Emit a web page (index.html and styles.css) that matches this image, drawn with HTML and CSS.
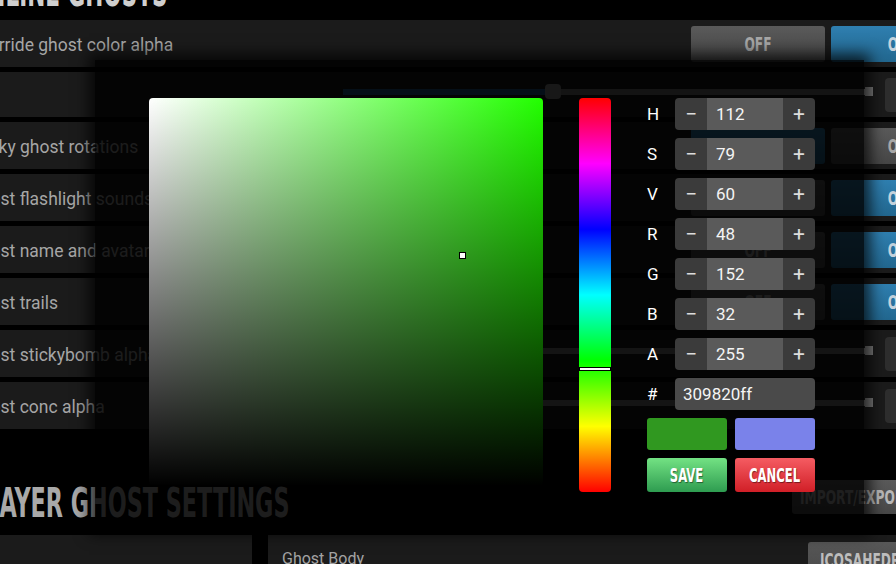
FILE: index.html
```html
<!DOCTYPE html>
<html>
<head>
<meta charset="utf-8">
<link rel="stylesheet" href="styles.css">
</head>
<body>
<div class="page">
  <h1 class="title"><span class="cond">ONLINE GHOSTS</span></h1>
  <div class="rows">
    <div class="row">
      <span class="label">Override ghost color alpha</span>
      <div class="toggle"><button class="btn gray"><span class="cond">OFF</span></button><button class="btn blue"><span class="cond">ON</span></button></div>
    </div>
    <div class="row slim">
      <span class="label short"></span>
      <div class="track"><div class="fill"></div><div class="thumb"></div><div class="line"></div><div class="cap"></div></div>
      <div class="numbox"></div>
    </div>
    <div class="row">
      <span class="label">Sticky ghost rotations</span>
      <div class="toggle"><button class="btn blue"><span class="cond">OFF</span></button><button class="btn gray"><span class="cond">ON</span></button></div>
    </div>
    <div class="row">
      <span class="label">Ghost flashlight sounds</span>
      <div class="toggle"><button class="btn gray"><span class="cond">OFF</span></button><button class="btn blue"><span class="cond">ON</span></button></div>
    </div>
    <div class="row">
      <span class="label">Ghost name and avatar</span>
      <div class="toggle"><button class="btn gray"><span class="cond">OFF</span></button><button class="btn blue"><span class="cond">ON</span></button></div>
    </div>
    <div class="row">
      <span class="label">Ghost trails</span>
      <div class="toggle"><button class="btn gray"><span class="cond">OFF</span></button><button class="btn blue"><span class="cond">ON</span></button></div>
    </div>
    <div class="row">
      <span class="label short">Ghost stickybomb alpha</span>
      <div class="track"><div class="line"></div><div class="cap"></div></div>
      <div class="numbox"></div>
    </div>
    <div class="row">
      <span class="label short">Ghost conc alpha</span>
      <div class="track"><div class="line"></div><div class="cap"></div></div>
      <div class="numbox"></div>
    </div>
  </div>
  <div class="sect">
    <h2 class="title sect-title"><span class="cond">PLAYER GHOST SETTINGS</span></h2>
    <button class="ie"><span class="cond">IMPORT/EXPORT</span></button>
  </div>
  <div class="bottom">
    <div class="panel"></div>
    <div class="panel right">
      <span class="plabel">Ghost Body</span>
      <button class="ico"><span class="cond">ICOSAHEDRON</span></button>
    </div>
  </div>
</div>

<div class="modal">
  <div class="sv"><div class="sv-marker"></div></div>
  <div class="hue"><div class="hue-marker"></div></div>
  <div class="controls">
    <div class="crow"><span class="clabel">H</span><div class="spin"><span class="m">−</span><span class="v">112</span><span class="p">+</span></div></div>
    <div class="crow"><span class="clabel">S</span><div class="spin"><span class="m">−</span><span class="v">79</span><span class="p">+</span></div></div>
    <div class="crow"><span class="clabel">V</span><div class="spin"><span class="m">−</span><span class="v">60</span><span class="p">+</span></div></div>
    <div class="crow"><span class="clabel">R</span><div class="spin"><span class="m">−</span><span class="v">48</span><span class="p">+</span></div></div>
    <div class="crow"><span class="clabel">G</span><div class="spin"><span class="m">−</span><span class="v">152</span><span class="p">+</span></div></div>
    <div class="crow"><span class="clabel">B</span><div class="spin"><span class="m">−</span><span class="v">32</span><span class="p">+</span></div></div>
    <div class="crow"><span class="clabel">A</span><div class="spin"><span class="m">−</span><span class="v">255</span><span class="p">+</span></div></div>
    <div class="crow"><span class="clabel">#</span><div class="hex">309820ff</div></div>
    <div class="swatches"><div class="sw new"></div><div class="sw old"></div></div>
    <div class="acts"><button class="save"><span class="cond">SAVE</span></button><button class="cancel"><span class="cond">CANCEL</span></button></div>
  </div>
</div>
</body>
</html>
```
FILE: styles.css
```css
* { box-sizing: border-box; margin: 0; padding: 0; }
html, body { width: 896px; height: 564px; overflow: hidden; background: #000; }
body { position: relative; font-family: Roboto, "Liberation Sans", sans-serif; }
button { border: 0; cursor: pointer; font: inherit; }

.cond {
  display: inline-block;
  font-family: "DejaVu Sans Condensed", "DejaVu Sans", sans-serif;
  font-weight: bold;
  transform: scaleX(0.68);
  white-space: nowrap;
}

.page { margin-left: -43px; width: 1060px; display: flex; flex-direction: column; }

.title {
  height: 48px;
  line-height: 48px;
  margin-top: -32px;
  padding-left: 12px;
  font-size: 40px;
  font-weight: bold;
  color: #cfcfcf;
  white-space: nowrap;
}
.title .cond { transform: scaleX(0.6); transform-origin: left center; }

.rows { margin-top: 4px; display: flex; flex-direction: column; gap: 5px; }
.row { height: 47px; background: #1b1b1b; display: flex; align-items: center; padding-left: 12px; }
.row.slim { height: 45px; }
.label { width: 722px; font-size: 17.5px; color: #a6a6a6; white-space: nowrap; padding-top: 2px; }
.label.short { width: 374px; }

.toggle { display: flex; gap: 6px; }
.btn { width: 134px; height: 36px; border-radius: 3px; font-size: 20px; line-height: 36px; text-align: center; }
.btn.gray { background: linear-gradient(#5a5a5a, #464646); color: #a8a8a8; }
.btn.blue { background: linear-gradient(#2f7fb0, #22678f); color: #c4d2dc; }

.track { width: 530px; height: 15px; display: flex; align-items: center; margin-bottom: 6px; }
.fill { width: 202px; height: 6px; background: #1e5a8c; }
.thumb { width: 16px; height: 15px; border-radius: 4px; background: #8c8c8c; }
.line { flex: 1; height: 6px; background: #777; }
.cap { width: 8px; height: 9px; background: #7c7c7c; }
.numbox { width: 75px; height: 34px; margin-left: 12px; background: #2e2e2e; border-radius: 4px; }

.sect { margin-top: 50px; height: 48px; display: grid; grid-template-columns: 835px 140px; }
.sect-title { margin-top: 0; color: #a9a9a9; }
.sect-title .cond { transform: scaleX(0.62); }
.ie {
  margin-top: 1px; height: 34px; border-radius: 3px;
  background: linear-gradient(#5a5a5a, #474747); color: #b8b8b8;
  font-size: 20px; text-align: left; padding-left: 0;
}
.ie .cond { transform-origin: left center; margin-left: 8px; }

.bottom { margin-top: 8px; height: 47px; display: grid; grid-template-columns: 295px 1fr; gap: 16px; }
.panel { background: #1b1b1b; }
.panel.right { display: flex; padding-left: 14px; }
.plabel { width: 526px; font-size: 16px; color: #a3a3a3; align-self: center; }
.ico {
  width: 130px; height: 36px; margin-top: 7px; border-radius: 3px;
  background: linear-gradient(#585858, #474747); color: #bdbdbd;
  font-size: 20px; text-align: left;
}
.ico .cond { transform-origin: left center; margin-left: 12px; }

/* Modal */
.modal {
  position: absolute; left: 95px; top: 60px; width: 769px; height: 468px;
  background: rgba(0, 0, 0, 0.83);
  box-shadow: 0 0 14px 6px rgba(0, 0, 0, 0.75);
  display: flex; gap: 36px; padding: 38px 0 0 54px;
}
.sv {
  position: relative; width: 394px; height: 388px; border-radius: 4px;
  background: linear-gradient(to top, #000, rgba(0,0,0,0)), linear-gradient(to right, #fff, #22ff00);
}
.sv-marker { position: absolute; left: 310px; top: 154px; width: 7px; height: 7px; background: #fff; border: 1px solid #000; }
.hue {
  position: relative; width: 32px; height: 394px; border-radius: 4px;
  background: linear-gradient(to bottom, #f00, #f0f, #00f, #0ff, #0f0, #ff0, #f00);
}
.hue-marker { position: absolute; left: 0; right: 0; top: 269px; height: 4px; background: #fff; border: 1px solid #000; }

.controls { width: 168px; display: flex; flex-direction: column; gap: 8px; }
.crow { display: flex; align-items: center; height: 32px; }
.clabel { width: 28px; color: #fff; font-size: 17px; }
.spin { display: flex; width: 140px; height: 32px; border-radius: 4px; overflow: hidden; }
.spin .m, .spin .p { width: 32px; background: #3b3b3b; color: #dcdcdc; display: flex; align-items: center; justify-content: center; font-size: 21px; }
.spin .v { flex: 1; background: #5a5a5a; color: #f4f4f4; font-size: 17px; padding-left: 9px; display: flex; align-items: center; }
.hex { width: 140px; height: 32px; border-radius: 4px; background: #4a4a4a; color: #f4f4f4; font-size: 17px; padding-left: 8px; display: flex; align-items: center; }

.swatches, .acts { display: flex; gap: 8px; }
.sw { width: 80px; height: 32px; border-radius: 3px; }
.sw.new { background: #309820; }
.sw.old { background: #7a82ea; }
.acts button { width: 80px; height: 34px; border-radius: 3px; color: #fff; font-size: 19px; text-align: center; text-shadow: 1px 1px 1px rgba(0,0,0,0.45); }
.save { background: linear-gradient(#73e283, #2e9c50); }
.cancel { background: linear-gradient(#f55c62, #d11f27); }
```
